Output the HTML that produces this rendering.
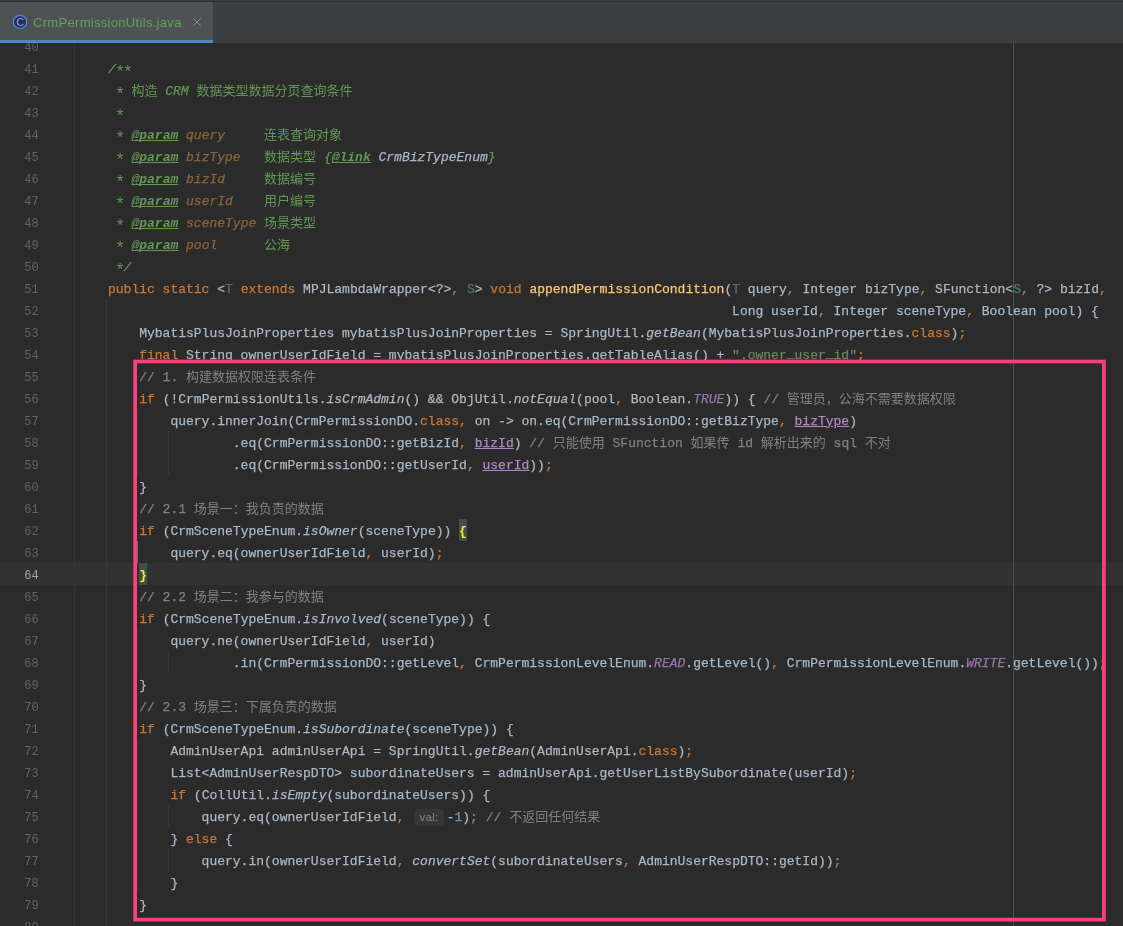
<!DOCTYPE html>
<html lang="zh-CN">
<head>
<meta charset="utf-8">
<title>CrmPermissionUtils.java</title>
<style>
html,body{margin:0;padding:0;}
body{width:1123px;height:926px;overflow:hidden;background:#2b2b2b;position:relative;
  font-family:"Liberation Mono","Noto Sans CJK SC",monospace;}
#editor{position:absolute;left:0;top:0;width:1123px;height:926px;overflow:hidden;background:#2b2b2b;}
.cur{position:absolute;left:0;width:1123px;height:22px;background:#323232;}
.gsep{position:absolute;left:74px;top:43px;width:1px;height:883px;background:#353535;}
.guide{position:absolute;width:1px;background:#373737;}
.margin{position:absolute;left:1013px;top:43px;width:1px;height:883px;background:#4b4d50;}
.ln{position:absolute;left:0;width:38.6px;height:22px;line-height:22px;text-align:right;color:#606366;
  font-family:"Liberation Mono",monospace;font-size:12px;white-space:pre;padding-top:1.5px;box-sizing:border-box;}
.ln.on{color:#a4a3a3;}
.l{position:absolute;left:76.8px;height:22px;line-height:22px;font-size:13px;color:#a9b7c6;white-space:pre;
  padding-top:1.5px;box-sizing:border-box;font-kerning:none;font-variant-ligatures:none;-webkit-text-stroke:0.25px;}
.k{color:#cc7832;}
.c{color:#808080;}
.dc{color:#629755;font-style:italic;}
.dz{color:#629755;-webkit-text-stroke:0;}
.z{-webkit-text-stroke:0;}
.as{display:inline-block;width:7.8px;height:0;line-height:0;font-size:17px;font-style:normal;text-align:center;position:relative;top:4.6px;left:-0.8px;vertical-align:baseline;-webkit-text-stroke:0;}
.dt{color:#629755;font-style:italic;font-weight:bold;text-decoration:underline;text-decoration-thickness:1px;text-underline-offset:1px;text-decoration-skip-ink:none;-webkit-text-stroke:0;}
.dp{color:#8a653b;font-style:italic;}
.dl{color:#a9b7c6;font-style:italic;}
.s{color:#6a8759;}
.us{position:relative;top:-1.7px;}
.m{color:#ffc66d;}
.t{color:#507874;}
.i{font-style:italic;}
.f{color:#9876aa;font-style:italic;}
.n{color:#6897bb;}
.u{color:#b389c5;text-decoration:underline;}
.b{color:#ffef28;font-weight:bold;-webkit-text-stroke:0;background:#3b514d;display:inline-block;height:22px;line-height:22px;vertical-align:top;margin-top:-1.5px;padding-top:1.5px;box-sizing:border-box;}
.hint{display:inline-block;box-sizing:border-box;width:29.5px;height:17px;margin:0 2.9px 0 2px;vertical-align:top;margin-top:2.5px;
  background:#353637;border-radius:4px;color:#787878;font-family:"Liberation Sans",sans-serif;font-size:11px;line-height:17px;text-align:center;letter-spacing:0.4px;text-indent:0.4px;}
#code{position:absolute;left:0;top:0;width:1123px;height:926px;will-change:transform;}
#tabbar{position:absolute;left:0;top:0;width:1123px;height:43px;background:#3c3f41;}
#tabbar .topline{position:absolute;left:0;top:1px;width:1123px;height:1px;background:#2e2f30;}
#tab{position:absolute;left:0;top:2px;width:213px;height:41px;background:#4e5254;}
#tab .ul{position:absolute;left:0;bottom:0;width:213px;height:3px;background:#4a88c7;}
#tab .name{will-change:transform;position:absolute;left:33px;top:11.5px;height:18px;line-height:18px;font-family:"Liberation Sans",sans-serif;font-size:13px;color:#62a355;white-space:pre;letter-spacing:0.31px;}
#tab svg{position:absolute;}
#redbox{position:absolute;left:0;top:0;pointer-events:none;}
</style>
</head>
<body>
<div id="editor">
<div class="cur" style="top:563px"></div>
<div class="gsep"></div>
<div class="margin"></div>
<div class="guide" style="left:106px;top:299px;height:638px"></div>
<div class="guide" style="left:137px;top:409px;height:66px"></div>
<div class="guide" style="left:137px;top:541px;height:22px;background:#54746b"></div>
<div class="guide" style="left:137px;top:629px;height:44px"></div>
<div class="guide" style="left:137px;top:739px;height:154px"></div>
<div class="guide" style="left:168px;top:431px;height:44px"></div>
<div class="guide" style="left:168px;top:651px;height:22px"></div>
<div class="guide" style="left:168px;top:805px;height:22px"></div>
<div class="guide" style="left:168px;top:849px;height:22px"></div>
<div id="code">
<div class="ln" style="top:35px">40</div>
<div class="ln" style="top:57px">41</div>
<div class="ln" style="top:79px">42</div>
<div class="ln" style="top:101px">43</div>
<div class="ln" style="top:123px">44</div>
<div class="ln" style="top:145px">45</div>
<div class="ln" style="top:167px">46</div>
<div class="ln" style="top:189px">47</div>
<div class="ln" style="top:211px">48</div>
<div class="ln" style="top:233px">49</div>
<div class="ln" style="top:255px">50</div>
<div class="ln" style="top:277px">51</div>
<div class="ln" style="top:299px">52</div>
<div class="ln" style="top:321px">53</div>
<div class="ln" style="top:343px">54</div>
<div class="ln" style="top:365px">55</div>
<div class="ln" style="top:387px">56</div>
<div class="ln" style="top:409px">57</div>
<div class="ln" style="top:431px">58</div>
<div class="ln" style="top:453px">59</div>
<div class="ln" style="top:475px">60</div>
<div class="ln" style="top:497px">61</div>
<div class="ln" style="top:519px">62</div>
<div class="ln" style="top:541px">63</div>
<div class="ln on" style="top:563px">64</div>
<div class="ln" style="top:585px">65</div>
<div class="ln" style="top:607px">66</div>
<div class="ln" style="top:629px">67</div>
<div class="ln" style="top:651px">68</div>
<div class="ln" style="top:673px">69</div>
<div class="ln" style="top:695px">70</div>
<div class="ln" style="top:717px">71</div>
<div class="ln" style="top:739px">72</div>
<div class="ln" style="top:761px">73</div>
<div class="ln" style="top:783px">74</div>
<div class="ln" style="top:805px">75</div>
<div class="ln" style="top:827px">76</div>
<div class="ln" style="top:849px">77</div>
<div class="ln" style="top:871px">78</div>
<div class="ln" style="top:893px">79</div>
<div class="ln" style="top:915px">80</div>
<div class="l" style="top:57px"><span class="dc">    /<span class="as">*</span><span class="as">*</span></span></div>
<div class="l" style="top:79px"><span class="dc">     <span class="as">*</span> </span><span class="dz">构造</span><span class="dc"> CRM </span><span class="dz">数据类型数据分页查询条件</span></div>
<div class="l" style="top:101px"><span class="dc">     <span class="as">*</span></span></div>
<div class="l" style="top:123px"><span class="dc">     <span class="as">*</span> </span><span class="dt">@param</span><span class="dc"> </span><span class="dp">query</span><span class="dc">     </span><span class="dz">连表查询对象</span></div>
<div class="l" style="top:145px"><span class="dc">     <span class="as">*</span> </span><span class="dt">@param</span><span class="dc"> </span><span class="dp">bizType</span><span class="dc">   </span><span class="dz">数据类型</span><span class="dc"> {</span><span class="dt">@link</span><span class="dc"> </span><span class="dl">CrmBizTypeEnum</span><span class="dc">}</span></div>
<div class="l" style="top:167px"><span class="dc">     <span class="as">*</span> </span><span class="dt">@param</span><span class="dc"> </span><span class="dp">bizId</span><span class="dc">     </span><span class="dz">数据编号</span></div>
<div class="l" style="top:189px"><span class="dc">     <span class="as">*</span> </span><span class="dt">@param</span><span class="dc"> </span><span class="dp">userId</span><span class="dc">    </span><span class="dz">用户编号</span></div>
<div class="l" style="top:211px"><span class="dc">     <span class="as">*</span> </span><span class="dt">@param</span><span class="dc"> </span><span class="dp">sceneType</span><span class="dc"> </span><span class="dz">场景类型</span></div>
<div class="l" style="top:233px"><span class="dc">     <span class="as">*</span> </span><span class="dt">@param</span><span class="dc"> </span><span class="dp">pool</span><span class="dc">      </span><span class="dz">公海</span></div>
<div class="l" style="top:255px"><span class="dc">     <span class="as">*</span>/</span></div>
<div class="l" style="top:277px"><span class="k">    public static </span>&lt;<span class="t">T</span><span class="k"> extends </span>MPJLambdaWrapper&lt;?&gt;<span class="k">,</span> <span class="t">S</span>&gt; <span class="k">void </span><span class="m">appendPermissionCondition</span>(<span class="t">T</span> query<span class="k">,</span> Integer bizType<span class="k">,</span> SFunction&lt;<span class="t">S</span><span class="k">,</span> ?&gt; bizId<span class="k">,</span></div>
<div class="l" style="top:299px">                                                                                    Long userId<span class="k">,</span> Integer sceneType<span class="k">,</span> Boolean pool) {</div>
<div class="l" style="top:321px">        MybatisPlusJoinProperties mybatisPlusJoinProperties = SpringUtil.<span class="i">getBean</span>(MybatisPlusJoinProperties.<span class="k">class</span>)<span class="k">;</span></div>
<div class="l" style="top:343px"><span class="k">        final </span>String ownerUserIdField = mybatisPlusJoinProperties.getTableAlias() + <span class="s">".owner<span class="us">_</span>user<span class="us">_</span>id"</span><span class="k">;</span></div>
<div class="l" style="top:365px"><span class="c">        // 1. <span class="z">构建数据权限连表条件</span></span></div>
<div class="l" style="top:387px"><span class="k">        if </span>(!CrmPermissionUtils.<span class="i">isCrmAdmin</span>() &amp;&amp; ObjUtil.<span class="i">notEqual</span>(pool<span class="k">,</span> Boolean.<span class="f">TRUE</span>)) { <span class="c">// <span class="z">管理员，公海不需要数据权限</span></span></div>
<div class="l" style="top:409px">            query.innerJoin(CrmPermissionDO.<span class="k">class,</span> on -&gt; on.eq(CrmPermissionDO::getBizType<span class="k">,</span> <span class="u">bizType</span>)</div>
<div class="l" style="top:431px">                    .eq(CrmPermissionDO::getBizId<span class="k">,</span> <span class="u">bizId</span>) <span class="c">// <span class="z">只能使用</span> SFunction <span class="z">如果传</span> id <span class="z">解析出来的</span> sql <span class="z">不对</span></span></div>
<div class="l" style="top:453px">                    .eq(CrmPermissionDO::getUserId<span class="k">,</span> <span class="u">userId</span>))<span class="k">;</span></div>
<div class="l" style="top:475px">        }</div>
<div class="l" style="top:497px"><span class="c">        // 2.1 <span class="z">场景一：我负责的数据</span></span></div>
<div class="l" style="top:519px"><span class="k">        if </span>(CrmSceneTypeEnum.<span class="i">isOwner</span>(sceneType)) <span class="b">{</span></div>
<div class="l" style="top:541px">            query.eq(ownerUserIdField<span class="k">,</span> userId)<span class="k">;</span></div>
<div class="l" style="top:563px">        <span class="b">}</span></div>
<div class="l" style="top:585px"><span class="c">        // 2.2 <span class="z">场景二：我参与的数据</span></span></div>
<div class="l" style="top:607px"><span class="k">        if </span>(CrmSceneTypeEnum.<span class="i">isInvolved</span>(sceneType)) {</div>
<div class="l" style="top:629px">            query.ne(ownerUserIdField<span class="k">,</span> userId)</div>
<div class="l" style="top:651px">                    .in(CrmPermissionDO::getLevel<span class="k">,</span> CrmPermissionLevelEnum.<span class="f">READ</span>.getLevel()<span class="k">,</span> CrmPermissionLevelEnum.<span class="f">WRITE</span>.getLevel())<span class="k">;</span></div>
<div class="l" style="top:673px">        }</div>
<div class="l" style="top:695px"><span class="c">        // 2.3 <span class="z">场景三：下属负责的数据</span></span></div>
<div class="l" style="top:717px"><span class="k">        if </span>(CrmSceneTypeEnum.<span class="i">isSubordinate</span>(sceneType)) {</div>
<div class="l" style="top:739px">            AdminUserApi adminUserApi = SpringUtil.<span class="i">getBean</span>(AdminUserApi.<span class="k">class</span>)<span class="k">;</span></div>
<div class="l" style="top:761px">            List&lt;AdminUserRespDTO&gt; subordinateUsers = adminUserApi.getUserListBySubordinate(userId)<span class="k">;</span></div>
<div class="l" style="top:783px"><span class="k">            if </span>(CollUtil.<span class="i">isEmpty</span>(subordinateUsers)) {</div>
<div class="l" style="top:805px">                query.eq(ownerUserIdField<span class="k">,</span> <span class="hint">val:</span>-<span class="n">1</span>)<span class="k">;</span> <span class="c">// <span class="z">不返回任何结果</span></span></div>
<div class="l" style="top:827px">            } <span class="k">else </span>{</div>
<div class="l" style="top:849px">                query.in(ownerUserIdField<span class="k">,</span> <span class="i">convertSet</span>(subordinateUsers<span class="k">,</span> AdminUserRespDTO::getId))<span class="k">;</span></div>
<div class="l" style="top:871px">            }</div>
<div class="l" style="top:893px">        }</div>
</div>
<svg id="redbox" width="1123" height="926" viewBox="0 0 1123 926"><rect x="135.15" y="361.5" width="968.75" height="558.15" fill="none" stroke="#fd3f7c" stroke-width="3.7"/></svg>
</div>
<div id="tabbar">
<div class="topline"></div>
<div id="tab">
<svg width="16" height="16" viewBox="0 0 16 16" style="left:12px;top:12px">
<circle cx="8" cy="7.9" r="6.6" fill="#25324d" stroke="#548af7" stroke-width="1.2"/>
<text x="8.1" y="11.7" text-anchor="middle" font-family="Liberation Sans, sans-serif" font-size="10.3" fill="#86a9f5">C</text>
</svg>
<span class="name">CrmPermissionUtils.java</span>
<svg width="10" height="10" viewBox="0 0 10 10" style="left:192px;top:15.1px"><path d="M1.2 1.2 L8.8 8.8 M8.8 1.2 L1.2 8.8" stroke="#868a8c" stroke-width="1" fill="none"/></svg>
<div class="ul"></div>
</div>
</div>
</body>
</html>
